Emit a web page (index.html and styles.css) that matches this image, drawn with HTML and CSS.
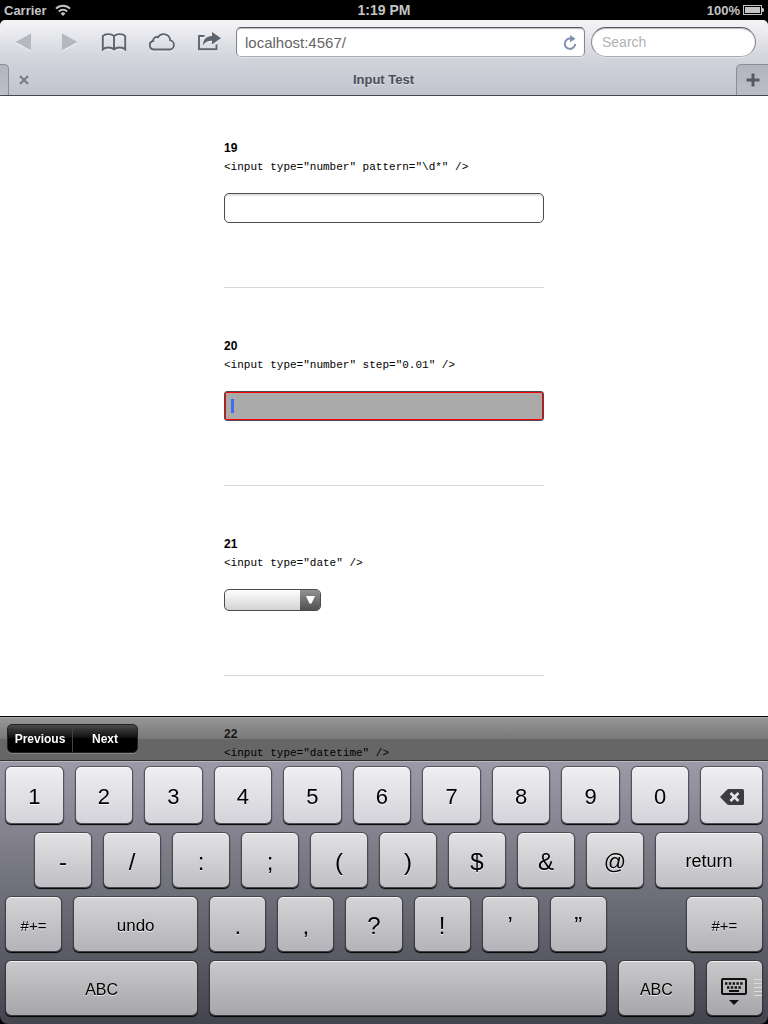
FILE: index.html
```html
<!DOCTYPE html>
<html lang="en">
<head>
<meta charset="utf-8">
<meta name="viewport" content="width=device-width, initial-scale=1">
<title>Input Test</title>
<link rel="stylesheet" href="styles.css">
</head>
<body>
<header class="browser">
  <div class="status">
    <div class="status-side">Carrier
      <svg width="16" height="12" viewBox="0 0 16 12" fill="none" stroke="#c4c4c4" stroke-width="2" aria-hidden="true"><path d="M1 4.6a10 10 0 0 1 14 0M3.8 7.5a6 6 0 0 1 8.4 0"/><path d="M5.6 9.4a3.6 3.6 0 0 1 4.8 0L8 12z" fill="#c4c4c4" stroke="none"/></svg>
    </div>
    <div class="status-time">1:19 PM</div>
    <div class="status-side status-right">100%
      <svg width="21" height="10" viewBox="0 0 21 10" aria-hidden="true"><rect x=".5" y=".5" width="18" height="9" fill="none" stroke="#c4c4c4"/><path d="M2 2h15v6H2zM19 3h1l1 1v2l-1 1h-1z" fill="#c4c4c4"/></svg>
    </div>
  </div>
  <div class="chrome">
    <div class="toolbar">
      <nav class="nav">
        <button class="icon-btn" aria-label="Back"><svg width="30" height="20" viewBox="0 0 30 20"><path d="M7.500 10L23 1.500v17z" fill="#b5b9bf"/></svg></button>
        <button class="icon-btn" aria-label="Forward"><svg width="30" height="20" viewBox="0 0 30 20"><path d="M22.500 10L7 1.500v17z" fill="#b5b9bf"/></svg></button>
        <button class="icon-btn" aria-label="Bookmarks"><svg width="30" height="20" viewBox="0 0 30 20"><path d="M1.800 17.500V4.200C4 1.400 10.500 1.400 13 4.200C15.500 1.400 22 1.400 24.200 4.200V17.500C21.500 14.800 15.800 14.800 13 17.500C10.200 14.800 4.500 14.800 1.800 17.500zM13 4.200v13.300" fill="none" stroke="#5c646e" stroke-width="1.900"/></svg></button>
        <button class="icon-btn" aria-label="iCloud tabs"><svg width="30" height="20" viewBox="0 0 30 20"><path d="M7 17.500H22a4.600 4.600 0 0 0 1.200-9.100A6.600 6.600 0 0 0 11 5.300A3.600 3.600 0 0 0 6.200 9A4.300 4.300 0 0 0 7 17.500z" fill="none" stroke="#5c646e" stroke-width="1.900"/></svg></button>
        <button class="icon-btn" aria-label="Share"><svg width="30" height="20" viewBox="0 0 30 20"><path d="M10.500 4H5v13.200h17.500V12.500" fill="none" stroke="#5c646e" stroke-width="1.900"/><path d="M9 13.500C9 7.500 12.500 4 18 4V0l9 6.300-9 6.200V8.700C14 8.700 11 10 9 13.500z" fill="#5c646e"/></svg></button>
      </nav>
      <div class="address">
        <input class="address-input" type="text" value="localhost:4567/" aria-label="Address">
        <button class="reload" aria-label="Reload"><svg width="14" height="16" viewBox="0 0 14 16"><path d="M7.500 3.500A5.200 5.200 0 1 0 12.200 9" fill="none" stroke="#7d92ae" stroke-width="2"/><path d="M7 0l5.500 3.700L7 7.300z" fill="#7d92ae"/></svg></button>
      </div>
      <input class="search" type="search" placeholder="Search" aria-label="Search">
    </div>
    <div class="tabs">
      <div class="tab-edge tab-edge-left"></div>
      <div class="tab">
        <button class="tab-close" aria-label="Close tab"><svg width="10" height="10" viewBox="0 0 10 10"><path d="M1 1l8 8M9 1L1 9" stroke="#777b84" stroke-width="2"/></svg></button>
        <span class="tab-title">Input Test</span>
      </div>
      <button class="tab-edge tab-new" aria-label="New tab"><svg width="14" height="14" viewBox="0 0 14 14"><path d="M7 .5v13M.5 7h13" stroke="#535a63" stroke-width="3"/></svg></button>
    </div>
  </div>
</header>

<main class="page">
  <form class="tests">
    <section class="test">
      <label class="test-label" for="t19"><b class="test-no">19</b><code class="test-code">&lt;input type="number" pattern="\d*" /&gt;</code></label>
      <input class="field" id="t19" type="number">
    </section>
    <section class="test">
      <label class="test-label" for="t20"><b class="test-no">20</b><code class="test-code">&lt;input type="number" step="0.01" /&gt;</code></label>
      <div class="field-wrap">
        <input class="field field-active" id="t20" type="number" step="0.01">
        <span class="caret"></span>
      </div>
    </section>
    <section class="test">
      <label class="test-label" for="t21"><b class="test-no">21</b><code class="test-code">&lt;input type="date" /&gt;</code></label>
      <div class="date-wrap">
        <input class="date" id="t21" type="date">
        <span class="date-arrow"><svg width="9" height="8" viewBox="0 0 9 8"><path d="M0 0h9L5.500 7.500h-2z" fill="#fff"/></svg></span>
      </div>
    </section>
    <section class="test">
      <label class="test-label" for="t22"><b class="test-no">22</b><code class="test-code">&lt;input type="datetime" /&gt;</code></label>
      <input class="field" id="t22" type="text">
    </section>
  </form>
</main>

<div class="overlay">
  <div class="accessory">
    <div class="segmented"><button class="segment">Previous</button><button class="segment">Next</button></div>
  </div>
  <div class="keyboard-frame">
    <div class="keyboard">
      <div class="row row-1">
        <button class="key">1</button><button class="key">2</button><button class="key">3</button><button class="key">4</button><button class="key">5</button><button class="key">6</button><button class="key">7</button><button class="key">8</button><button class="key">9</button><button class="key">0</button>
        <button class="key" aria-label="Delete"><svg width="24" height="16" viewBox="0 0 24 16"><path d="M0 8L7 .8Q7.800 0 9 0H22.500Q24 0 24 1.500v13Q24 16 22.500 16H9Q7.800 16 7 15.200z" fill="#3d3d3f"/><path d="M10.500 4l8 8M18.500 4l-8 8" stroke="#e6e6e9" stroke-width="2.600"/></svg></button>
      </div>
      <div class="row row-2">
        <button class="key">-</button><button class="key">/</button><button class="key">:</button><button class="key">;</button><button class="key">(</button><button class="key">)</button><button class="key">$</button><button class="key">&amp;</button><button class="key key-at">@</button><button class="key key-return">return</button>
      </div>
      <div class="row row-3">
        <button class="key key-sym">#+=</button><button class="key key-word">undo</button><button class="key">.</button><button class="key">,</button><button class="key">?</button><button class="key">!</button><button class="key">’</button><button class="key">”</button><span></span><button class="key key-sym">#+=</button>
      </div>
      <div class="row row-4">
        <button class="key key-abc">ABC</button><button class="key" aria-label="Space"></button><button class="key key-abc">ABC</button>
        <button class="key key-hide" aria-label="Hide keyboard">
          <svg width="26" height="28" viewBox="0 0 26 28"><rect x="1" y="1" width="24" height="15" rx="1" fill="none" stroke="#111" stroke-width="2"/><path d="M4 5.500h18M6 9.500h15" stroke="#111" stroke-width="2.400" stroke-dasharray="2.400 1.400"/><path d="M8 13h10" stroke="#111" stroke-width="2"/><path d="M8 22h10l-5 5z" fill="#111"/></svg>
          <span class="grip"></span>
        </button>
      </div>
    </div>
  </div>
</div>
</body>
</html>
```

FILE: styles.css
```css
* { box-sizing: border-box; }

body {
  margin: 0;
  height: 100vh;
  display: flex;
  flex-direction: column;
  overflow: hidden;
  background: #fff;
  color: #000;
  font-family: "Liberation Sans", Arial, Helvetica, sans-serif;
}

button, input { font-family: inherit; margin: 0; }
button { border: 0; padding: 0; background: none; color: inherit; }
input { appearance: none; outline: 0; }
svg { display: block; }

/* Browser chrome */
.browser { background: #000; }

.status {
  display: flex;
  align-items: center;
  height: 20px;
  padding: 0 4px;
  color: #c4c4c4;
  font-size: 13px;
  font-weight: bold;
}
.status-side { flex: 1; display: flex; align-items: center; gap: 8px; }
.status-right { justify-content: flex-end; gap: 3px; }
.status-time { font-size: 14px; }

.chrome {
  border-bottom: 1px solid #45474b;
  border-radius: 5px 5px 0 0;
  background: linear-gradient(#f5f5f8, #d3d5dc 50%, #c1c4ce);
}
.toolbar { display: flex; align-items: center; height: 44px; padding-right: 12px; }
.nav { display: flex; width: 232px; margin-right: 4px; }
.icon-btn {
  flex: 1;
  display: flex;
  justify-content: center;
  filter: drop-shadow(0 1px 0 rgba(255, 255, 255, .7));
}
.address { flex: 1; position: relative; margin-right: 6px; }
.address-input, .search {
  display: block;
  height: 30px;
  border: 1px solid #85878c;
  border-top-color: #55575b;
  border-bottom-color: #a9abb0;
  background: #fff;
  box-shadow: inset 0 1px 1px #bbb, 0 1px 0 #e4e5ea;
}
.address-input {
  width: 100%;
  padding: 0 32px 0 8px;
  border-radius: 5px;
  color: #666;
  font-size: 15px;
}
.reload { position: absolute; top: 8px; right: 8px; }
.search { width: 165px; padding: 0 10px; border-radius: 15px; font-size: 14px; }
.search::placeholder { color: #b2b2b2; }

.tabs { display: flex; height: 31px; }
.tab-edge {
  border: 1px solid #8b8e98;
  border-bottom: 0;
  background: linear-gradient(#b2b4be, #bbbdc7);
}
.tab-edge-left { width: 9px; border-left: 0; border-radius: 0 5px 0 5px; }
.tab-new {
  width: 32px;
  display: flex;
  align-items: center;
  justify-content: center;
  border-right: 0;
  border-radius: 5px 0 0 0;
}
.tab { flex: 1; display: flex; align-items: center; padding: 0 10px; }
.tab-title {
  flex: 1;
  padding-left: 12px;
  color: #4a4e58;
  font-size: 13px;
  font-weight: bold;
  text-align: center;
  text-shadow: 0 1px 0 #dfe1e7;
}

/* Test page */
.page { flex: 1; min-height: 0; overflow: hidden; }
.tests { width: 320px; margin: 0 auto; }
.test { padding: 49px 0 64px; border-bottom: 1px solid #d8d8d8; }
.test:first-child { padding-top: 43px; }
.test-label { display: block; margin-bottom: 16px; }
.test-no { display: block; font-size: 12px; line-height: 18px; }
.test-code {
  display: block;
  font-family: "Liberation Mono", "Courier New", monospace;
  font-size: 11px;
  line-height: 20px;
}
.field {
  display: block;
  width: 100%;
  height: 30px;
  padding: 0 6px;
  border: 1px solid #4c4c4c;
  border-radius: 5px;
  background: #fff;
  box-shadow: inset 0 2px 1px #e2e2e2;
}
.field-wrap { position: relative; }
.field-active { border-radius: 3px; background: #aaa; box-shadow: inset 0 0 0 1px #f00; }
.caret {
  position: absolute;
  top: 8px;
  left: 7px;
  width: 3px;
  height: 14px;
  background: #426bf2;
}
.date-wrap {
  display: flex;
  width: 97px;
  height: 22px;
  overflow: hidden;
  border: 1px solid #4c4c4c;
  border-radius: 5px;
  background: linear-gradient(#fff, #d2d2d2);
}
.date { flex: 1; min-width: 0; height: 20px; padding: 0; border: 0; background: none; }
.date::-webkit-datetime-edit, .date::-webkit-calendar-picker-indicator { visibility: hidden; }
.date-arrow {
  display: flex;
  width: 20px;
  align-items: center;
  justify-content: center;
  background: linear-gradient(#929292, #505050);
}

/* Keyboard over the page */
.overlay { position: fixed; right: 0; bottom: 0; left: 0; }
.accessory {
  display: flex;
  align-items: center;
  height: 45px;
  padding: 0 7px;
  border-top: 1px solid #000;
  border-bottom: 1px solid #333;
  background: linear-gradient(rgba(70, 70, 70, .56), rgba(30, 30, 30, .6) 52%, rgba(0, 0, 0, .6) 52%);
  background-clip: padding-box;
  box-shadow: inset 0 1px 0 rgba(255, 255, 255, .2);
}
.segmented {
  display: flex;
  width: 131px;
  height: 29px;
  overflow: hidden;
  border: 1px solid #222;
  border-radius: 5px;
  background: linear-gradient(#4a4a4a, #0c0c0c 50%, #000 50%);
  box-shadow: 0 1px 0 #858585;
}
.segment { flex: 1; color: #fff; font-size: 12px; font-weight: bold; }
.segment + .segment { border-left: 1px solid #444; }

.keyboard-frame { background: #000; }
.keyboard {
  display: flex;
  flex-direction: column;
  gap: 8px;
  padding: 4px 5px 8px;
  border-top: 1px solid #b9b9bf;
  border-radius: 0 0 8px 8px;
  background: linear-gradient(#9b9aa6, #83828e 27%, #6a6b74 55%, #43444d);
}
.row { display: grid; column-gap: 11px; height: 56px; }
.row-1 { height: 58px; grid-template-columns: repeat(10, 58fr) 62fr; }
.row-2 { padding-left: 29px; grid-template-columns: repeat(9, 58fr) 108fr; }
.row-3 { grid-template-columns: 57fr 125fr repeat(7, 57fr) 77fr; }
.row-4 { grid-template-columns: 193fr 397fr 77fr 57fr; }

.key {
  display: flex;
  align-items: center;
  justify-content: center;
  min-width: 0;
  padding-top: 3px;
  border: 1px solid rgba(40, 40, 48, .6);
  border-radius: 6px;
  background-clip: padding-box;
  box-shadow: inset 0 1px 0 rgba(255, 255, 255, .7), 0 1px 1px #000;
  color: #000;
  font-size: 24px;
  text-shadow: 0 1px 0 rgba(255, 255, 255, .7);
}
.row-1 .key { background-image: linear-gradient(#efeff2, #d3d3d9); font-size: 22px; }
.row-2 .key { background-image: linear-gradient(#e2e2e4, #bfbfc4); }
.row-3 .key { background-image: linear-gradient(#d4d4d6, #b3b3b8); }
.row-4 .key { background-image: linear-gradient(#c9c9cb, #a7a7ab); }
.key-at { font-size: 22px; }
.key-return { font-size: 18px; }
.key-word { font-size: 17px; }
.key-abc { font-size: 16px; }
.key-sym { font-size: 15px; }
.key-hide { position: relative; padding-top: 8px; }
.grip {
  position: absolute;
  top: 18px;
  right: 0;
  width: 8px;
  height: 17px;
  background: repeating-linear-gradient(#dcdcde 0 1px, transparent 1px 4px);
}
```
